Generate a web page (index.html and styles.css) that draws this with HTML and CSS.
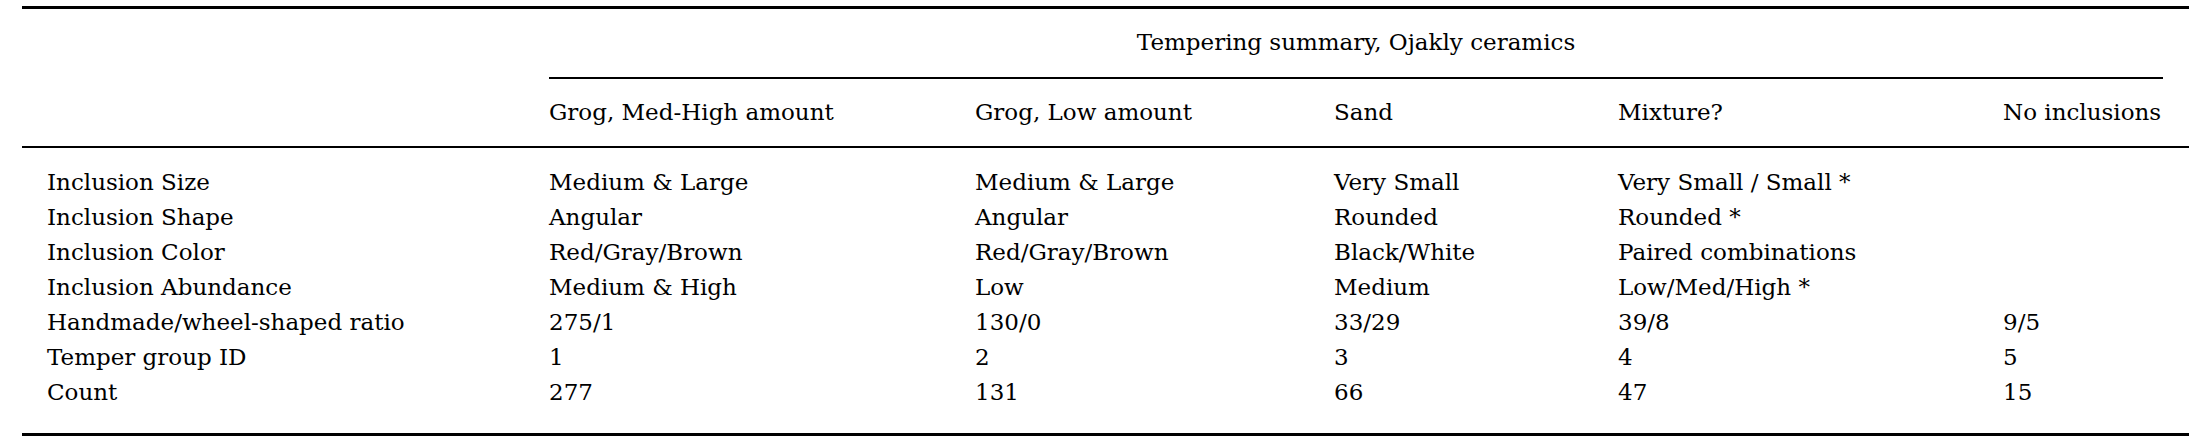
FILE: index.html
```html
<!DOCTYPE html>
<html lang="en">
<head>
<meta charset="utf-8">
<title>Tempering summary, Ojakly ceramics</title>
<link rel="stylesheet" href="styles.css">
</head>
<body>
<table class="summary">
  <colgroup>
    <col class="c-label">
    <col class="c-1">
    <col class="c-2">
    <col class="c-3">
    <col class="c-4">
    <col class="c-5">
  </colgroup>
  <thead>
    <tr class="group-row">
      <th class="blank" rowspan="2"></th>
      <th class="group" colspan="5"><div class="group-rule">Tempering summary, Ojakly ceramics</div></th>
    </tr>
    <tr class="col-row">
      <th>Grog, Med-High amount</th>
      <th>Grog, Low amount</th>
      <th>Sand</th>
      <th>Mixture?</th>
      <th class="last-col">No inclusions</th>
    </tr>
  </thead>
  <tbody>
    <tr class="first">
      <td class="label">Inclusion Size</td>
      <td>Medium &amp; Large</td>
      <td>Medium &amp; Large</td>
      <td>Very Small</td>
      <td>Very Small / Small *</td>
      <td class="last-col"></td>
    </tr>
    <tr>
      <td class="label">Inclusion Shape</td>
      <td>Angular</td>
      <td>Angular</td>
      <td>Rounded</td>
      <td>Rounded *</td>
      <td class="last-col"></td>
    </tr>
    <tr>
      <td class="label">Inclusion Color</td>
      <td>Red/Gray/Brown</td>
      <td>Red/Gray/Brown</td>
      <td>Black/White</td>
      <td>Paired combinations</td>
      <td class="last-col"></td>
    </tr>
    <tr>
      <td class="label">Inclusion Abundance</td>
      <td>Medium &amp; High</td>
      <td>Low</td>
      <td>Medium</td>
      <td>Low/Med/High *</td>
      <td class="last-col"></td>
    </tr>
    <tr>
      <td class="label">Handmade/wheel-shaped ratio</td>
      <td>275/1</td>
      <td>130/0</td>
      <td>33/29</td>
      <td>39/8</td>
      <td class="last-col">9/5</td>
    </tr>
    <tr>
      <td class="label">Temper group ID</td>
      <td>1</td>
      <td>2</td>
      <td>3</td>
      <td>4</td>
      <td class="last-col">5</td>
    </tr>
    <tr class="last">
      <td class="label">Count</td>
      <td>277</td>
      <td>131</td>
      <td>66</td>
      <td>47</td>
      <td class="last-col">15</td>
    </tr>
  </tbody>
</table>
</body>
</html>
```

FILE: styles.css
```css
html, body {
  margin: 0;
  padding: 0;
  background: #ffffff;
}

.summary {
  margin: 6px 0 0 22px;
  width: 2167px;
  table-layout: fixed;
  border-collapse: collapse;
  border-top: 3px solid #000;
  border-bottom: 3px solid #000;
  font-family: "DejaVu Serif", "Liberation Serif", serif;
  font-size: 23px;
  color: #000;
}

.c-label { width: 527px; }
.c-1 { width: 426px; }
.c-2 { width: 359px; }
.c-3 { width: 284px; }
.c-4 { width: 385px; }
.c-5 { width: 186px; }

.summary th,
.summary td {
  padding: 0;
  text-align: left;
  font-weight: normal;
  line-height: 35px;
  white-space: nowrap;
  vertical-align: middle;
}

.summary .blank,
.summary .label {
  padding-left: 25px;
}

.summary .last-col {
  padding-right: 26px;
}

.group-row th.group {
  padding: 0 26px 0 0;
  text-align: center;
}

.group-rule {
  padding: 16px 0 17px;
  border-bottom: 2px solid #000;
}

.col-row th {
  padding-top: 16px;
  padding-bottom: 16px;
}

.col-row {
  border-bottom: 2px solid #000;
}

.first td {
  padding-top: 17px;
}

.last td {
  padding-bottom: 23px;
}
```
